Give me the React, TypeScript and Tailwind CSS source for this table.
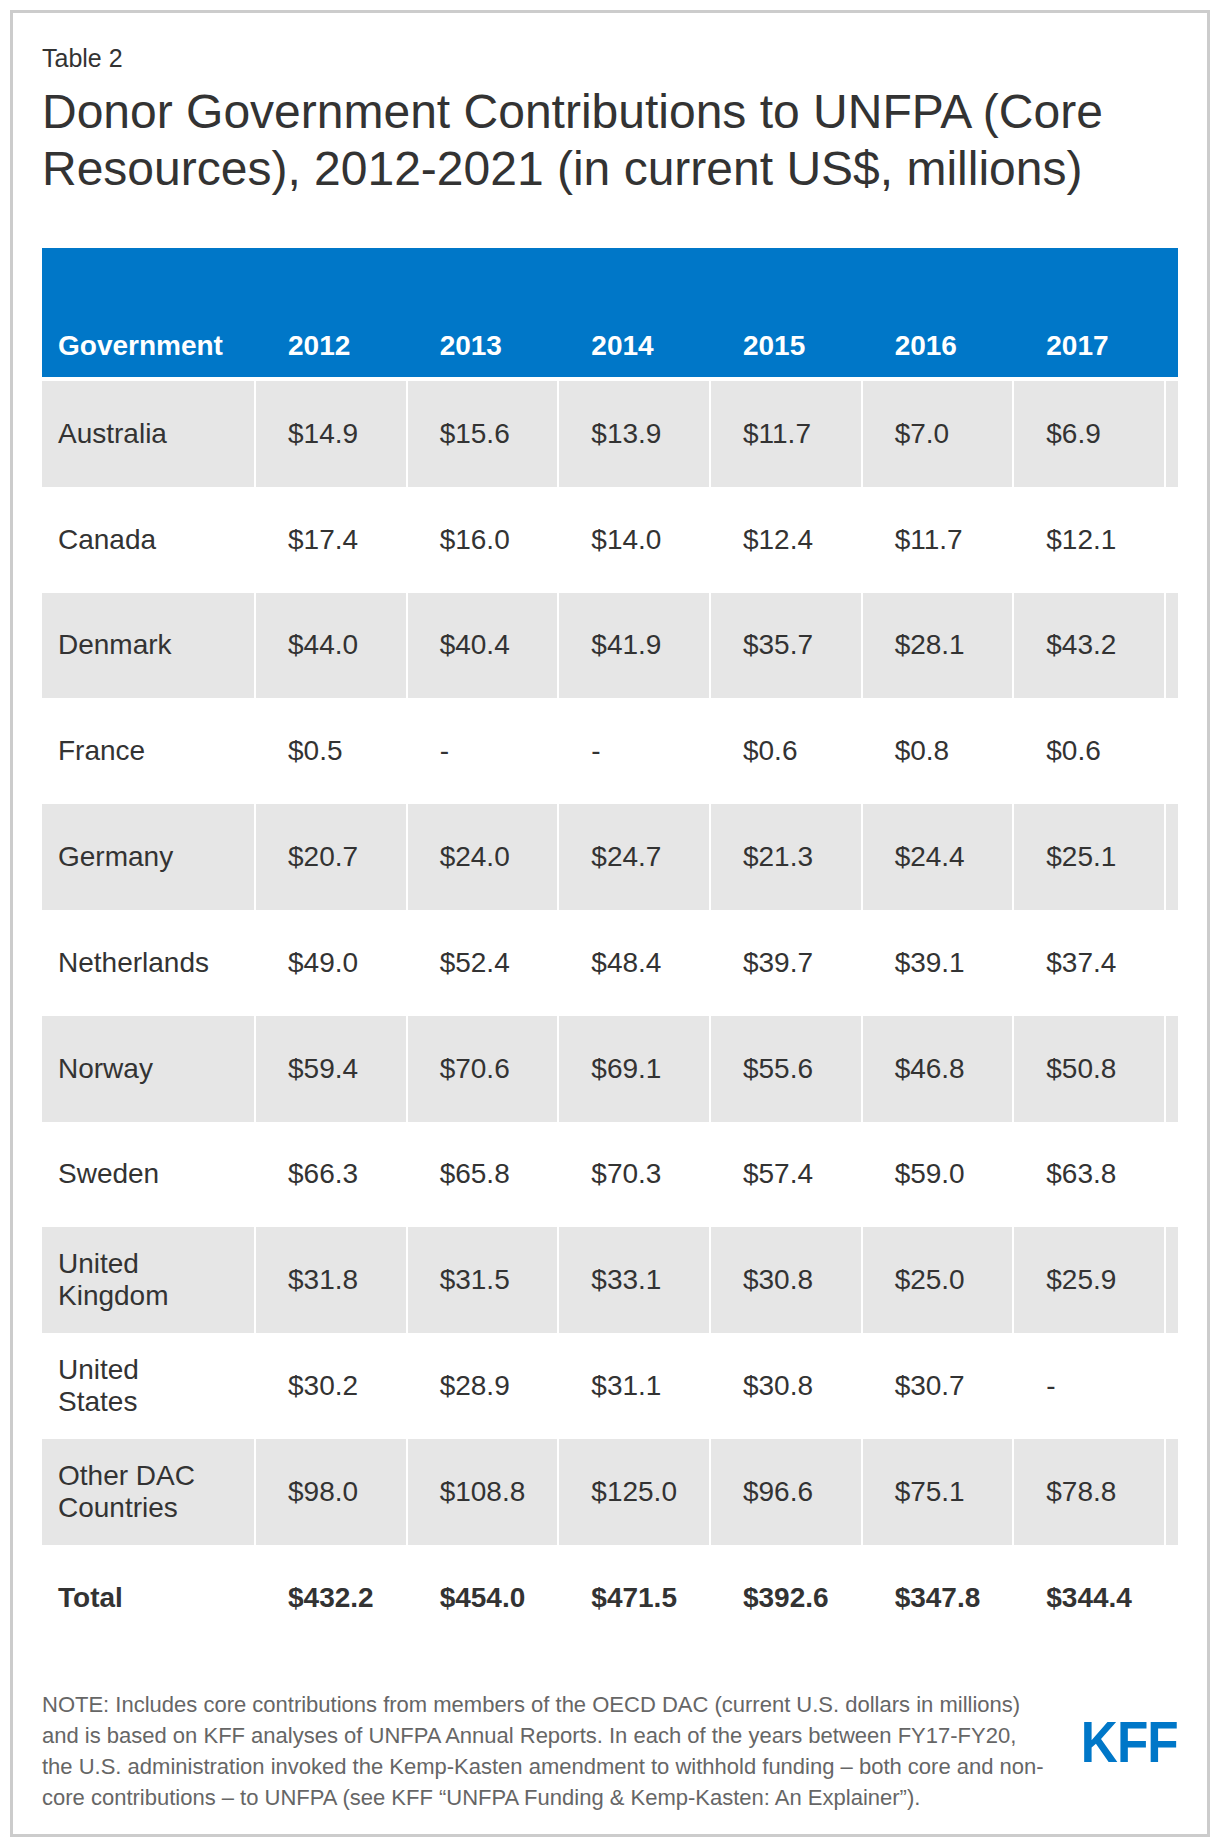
import React from 'react';

type Row = { name: string; values: string[] };

const years = ['2012', '2013', '2014', '2015', '2016', '2017'];

const rows: Row[] = [
  { name: 'Australia', values: ['$14.9', '$15.6', '$13.9', '$11.7', '$7.0', '$6.9'] },
  { name: 'Canada', values: ['$17.4', '$16.0', '$14.0', '$12.4', '$11.7', '$12.1'] },
  { name: 'Denmark', values: ['$44.0', '$40.4', '$41.9', '$35.7', '$28.1', '$43.2'] },
  { name: 'France', values: ['$0.5', '-', '-', '$0.6', '$0.8', '$0.6'] },
  { name: 'Germany', values: ['$20.7', '$24.0', '$24.7', '$21.3', '$24.4', '$25.1'] },
  { name: 'Netherlands', values: ['$49.0', '$52.4', '$48.4', '$39.7', '$39.1', '$37.4'] },
  { name: 'Norway', values: ['$59.4', '$70.6', '$69.1', '$55.6', '$46.8', '$50.8'] },
  { name: 'Sweden', values: ['$66.3', '$65.8', '$70.3', '$57.4', '$59.0', '$63.8'] },
  { name: 'United Kingdom', values: ['$31.8', '$31.5', '$33.1', '$30.8', '$25.0', '$25.9'] },
  { name: 'United States', values: ['$30.2', '$28.9', '$31.1', '$30.8', '$30.7', '-'] },
  { name: 'Other DAC Countries', values: ['$98.0', '$108.8', '$125.0', '$96.6', '$75.1', '$78.8'] },
];

const totals = ['$432.2', '$454.0', '$471.5', '$392.6', '$347.8', '$344.4'];

const cols = 'grid grid-cols-[212px_repeat(7,149.67px)] gap-x-[2px]';

const TableRow: React.FC<{ row: Row; shaded: boolean }> = ({ row, shaded }) => {
  const bg = shaded ? 'bg-[#e6e6e6]' : 'bg-white';
  return (
    <div className={`${cols} h-[105.8px]`}>
      <div className={`${bg} flex items-center pl-[16px] pr-[36px] leading-[32px]`}>{row.name}</div>
      {row.values.map((v, i) => (
        <div key={i} className={`${bg} flex items-center pl-[32px]`}>
          {v}
        </div>
      ))}
      {/* next year's column, cut off by the scroll area */}
      <div className={bg}></div>
    </div>
  );
};

export default function App() {
  return (
    <div className="w-[1220px] bg-white p-[10px] font-['Liberation_Sans',Arial,sans-serif] text-[#333333]">
      <div className="border-[3px] border-[#cccccc] px-[29px] pt-[31px] pb-[21px]">
        <div className="text-[25px] leading-[28px]">Table 2</div>
        <h1 className="mt-[11px] text-[48px] leading-[57px] font-normal">
          Donor Government Contributions to UNFPA (Core
          <br />
          Resources), 2012-2021 (in current US$, millions)
        </h1>

        <div className="mt-[51px] w-[1136px] overflow-hidden text-[28px]">
          <div className={`${cols} h-[129px] items-end bg-[#0077c8] pb-[15px] font-bold leading-[32px] text-white`}>
            <div className="pl-[16px]">Government</div>
            {years.map((y) => (
              <div key={y} className="pl-[32px]">
                {y}
              </div>
            ))}
            <div></div>
          </div>

          <div className="mt-[4px]">
            {rows.map((r, i) => (
              <TableRow key={r.name} row={r} shaded={i % 2 === 0} />
            ))}
            <div className={`${cols} h-[105.8px] font-bold`}>
              <div className="flex items-center pl-[16px]">Total</div>
              {totals.map((t, i) => (
                <div key={i} className="flex items-center pl-[32px]">
                  {t}
                </div>
              ))}
              <div></div>
            </div>
          </div>
        </div>

        <div className="mt-[38px] flex items-start justify-between">
          <p className="text-[22px] leading-[31px] text-[#666666] whitespace-nowrap">
            NOTE: Includes core contributions from members of the OECD DAC (current U.S. dollars in millions)
            <br />
            and is based on KFF analyses of UNFPA Annual Reports. In each of the years between FY17-FY20,
            <br />
            the U.S. administration invoked the Kemp-Kasten amendment to withhold funding – both core and non-
            <br />
            core contributions – to UNFPA (see KFF “UNFPA Funding &amp; Kemp-Kasten: An Explainer”).
          </p>
          <div className="mt-[25px] origin-right scale-x-[0.9] text-[57px] leading-none font-black tracking-[-1px] text-[#0077c8]">
            KFF
          </div>
        </div>
      </div>
    </div>
  );
}
